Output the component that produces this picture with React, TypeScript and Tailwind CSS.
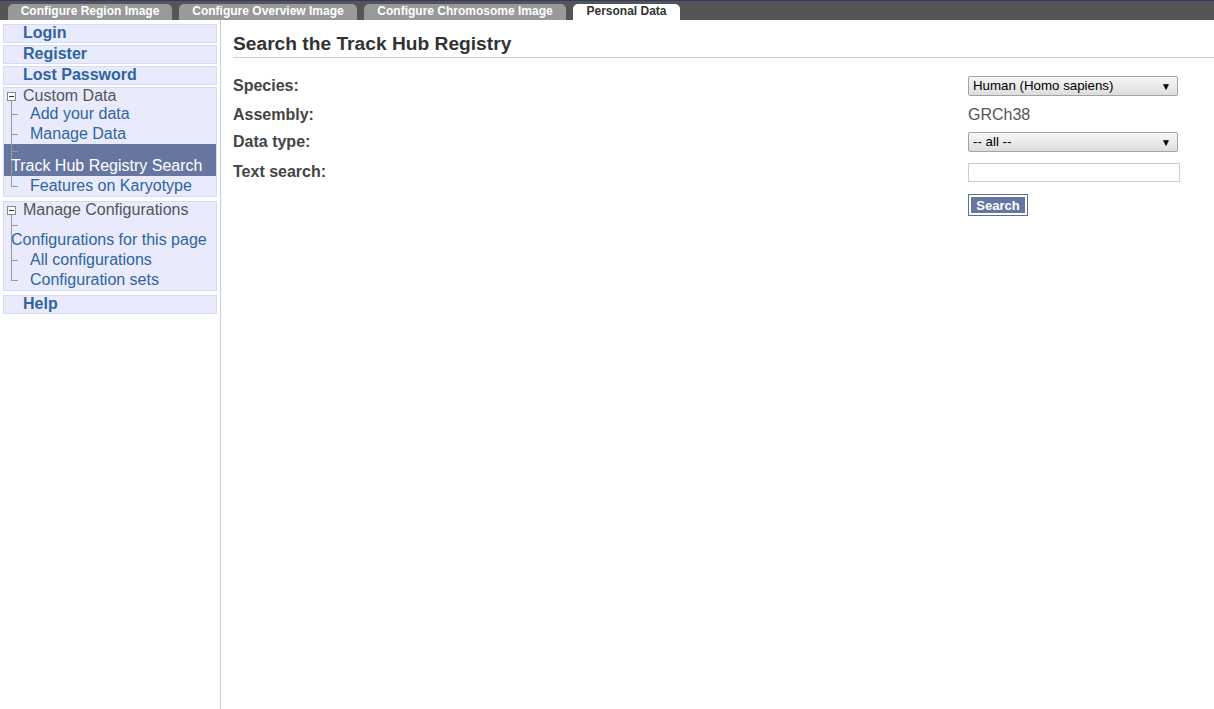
import React from 'react';

const tabs = [
  { label: 'Configure Region Image', w: 'w-[164px]', active: false },
  { label: 'Configure Overview Image', w: 'w-[178px]', active: false },
  { label: 'Configure Chromosome Image', w: 'w-[202px]', active: false },
  { label: 'Personal Data', w: 'w-[107px]', active: true },
];

function MinusBox() {
  return (
    <span className="absolute left-[3px] top-[4px] w-[9px] h-[9px] border border-[#888] bg-white flex items-center justify-center">
      <span className="block w-[5px] h-px bg-[#333]" />
    </span>
  );
}

function GroupHeader({ label }: { label: string }) {
  return (
    <div className="relative h-[16px] leading-[16px] pl-[19px] text-[#555]">
      <MinusBox />
      <span className="absolute left-[7px] top-[13px] bottom-0 w-px bg-[#999]" />
      {label}
    </div>
  );
}

function TreeItem({ label, last, wrap, active }: { label: string; last?: boolean; wrap?: boolean; active?: boolean }) {
  if (wrap) {
    return (
      <div className={`relative h-[32px] ${active ? 'bg-[#6676a1] text-white' : 'text-[#2f64a0]'}`}>
        <span className={`absolute left-[7px] top-0 w-px bg-[#999] ${last ? 'h-[8px]' : 'bottom-0'}`} />
        <span className="absolute left-[7px] top-[7px] w-[7px] h-px bg-[#999]" />
        <div className="pt-[12px] pl-[7px] leading-[20px] relative">{label}</div>
      </div>
    );
  }
  return (
    <div className="relative h-[20px] leading-[20px] pl-[26px] text-[#2f64a0]">
      <span className={`absolute left-[7px] top-0 w-px bg-[#999] ${last ? 'h-[10px]' : 'bottom-0'}`} />
      <span className="absolute left-[7px] top-[10px] w-[7px] h-px bg-[#999]" />
      {label}
    </div>
  );
}

function SideLink({ label, className = '' }: { label: string; className?: string }) {
  return (
    <div className={`border border-[#d5daf7] bg-[#e9ebfd] h-[19px] leading-[16px] pl-[19px] font-bold text-[#2f64a0] ${className}`}>
      {label}
    </div>
  );
}

function FakeSelect({ value }: { value: string }) {
  return (
    <div className="w-[210px] h-[20px] border border-[#a3a3a3] rounded-[2px] bg-gradient-to-b from-[#f7f7f7] to-[#dddddd] text-[13.3px] text-black flex items-center justify-between pl-[4px] pr-[6px]">
      <span>{value}</span>
      <span className="text-[10px]">▼</span>
    </div>
  );
}

export default function App() {
  return (
    <div className="h-[709px] bg-white font-['Liberation_Sans',Arial,sans-serif] text-[16px] flex flex-col overflow-hidden">
      {/* Tabs */}
      <div className="h-[20px] shrink-0 bg-[#555] border-t border-[#2b3a6e] flex items-end pl-[8px] gap-[7px]">
        {tabs.map((t) => (
          <div
            key={t.label}
            className={`${t.w} h-[16px] rounded-t-[5px] text-[12px] font-bold leading-[15px] text-center ${t.active ? 'bg-white text-[#333]' : 'bg-[#999] text-white'}`}
          >
            {t.label}
          </div>
        ))}
      </div>

      <div className="flex flex-1">
        {/* Sidebar */}
        <div className="w-[221px] shrink-0 border-r border-[#ccc] pt-[4px] pl-[3px] pr-[3px]">
          <div className="w-[214px]">
            <SideLink label="Login" />
            <SideLink label="Register" className="mt-[2px]" />
            <SideLink label="Lost Password" className="mt-[2px]" />

            <div className="mt-[2px] border border-[#d5daf7] bg-[#e9ebfd]">
              <GroupHeader label="Custom Data" />
              <TreeItem label="Add your data" />
              <TreeItem label="Manage Data" />
              <TreeItem label="Track Hub Registry Search" wrap active />
              <TreeItem label="Features on Karyotype" last />
            </div>

            <div className="mt-[4px] border border-[#d5daf7] bg-[#e9ebfd]">
              <GroupHeader label="Manage Configurations" />
              <TreeItem label="Configurations for this page" wrap />
              <TreeItem label="All configurations" />
              <TreeItem label="Configuration sets" last />
            </div>

            <SideLink label="Help" className="mt-[4px]" />
          </div>
        </div>

        {/* Main */}
        <div className="flex-1 pl-3 pt-[13px]">
          <h2 className="text-[19.2px] leading-[22px] font-bold text-[#333] pb-[2px] border-b border-[#ccc]">
            Search the Track Hub Registry
          </h2>

          <div className="flex items-center h-[20px] mt-[18px]">
            <div className="w-[735px] font-bold text-[#444]">Species:</div>
            <FakeSelect value="Human (Homo sapiens)" />
          </div>
          <div className="flex items-center h-[20px] mt-[9px]">
            <div className="w-[735px] font-bold text-[#444]">Assembly:</div>
            <div className="text-[#555]">GRCh38</div>
          </div>
          <div className="flex items-center h-[20px] mt-[7px]">
            <div className="w-[735px] font-bold text-[#444]">Data type:</div>
            <FakeSelect value="-- all --" />
          </div>
          <div className="flex items-center h-[20px] mt-[10px]">
            <div className="w-[735px] font-bold text-[#444]">Text search:</div>
            <input type="text" className="w-[212px] h-[19px] border border-[#ccc] outline-none" />
          </div>
          <div className="flex mt-[12px]">
            <div className="w-[735px]" />
            <button className="w-[60px] h-[22px] border border-[#5b6c99] p-px bg-white">
              <span className="block h-full border border-white bg-[#6676a1] text-white font-bold text-[13px] leading-[17px]">
                Search
              </span>
            </button>
          </div>
        </div>
      </div>
    </div>
  );
}
